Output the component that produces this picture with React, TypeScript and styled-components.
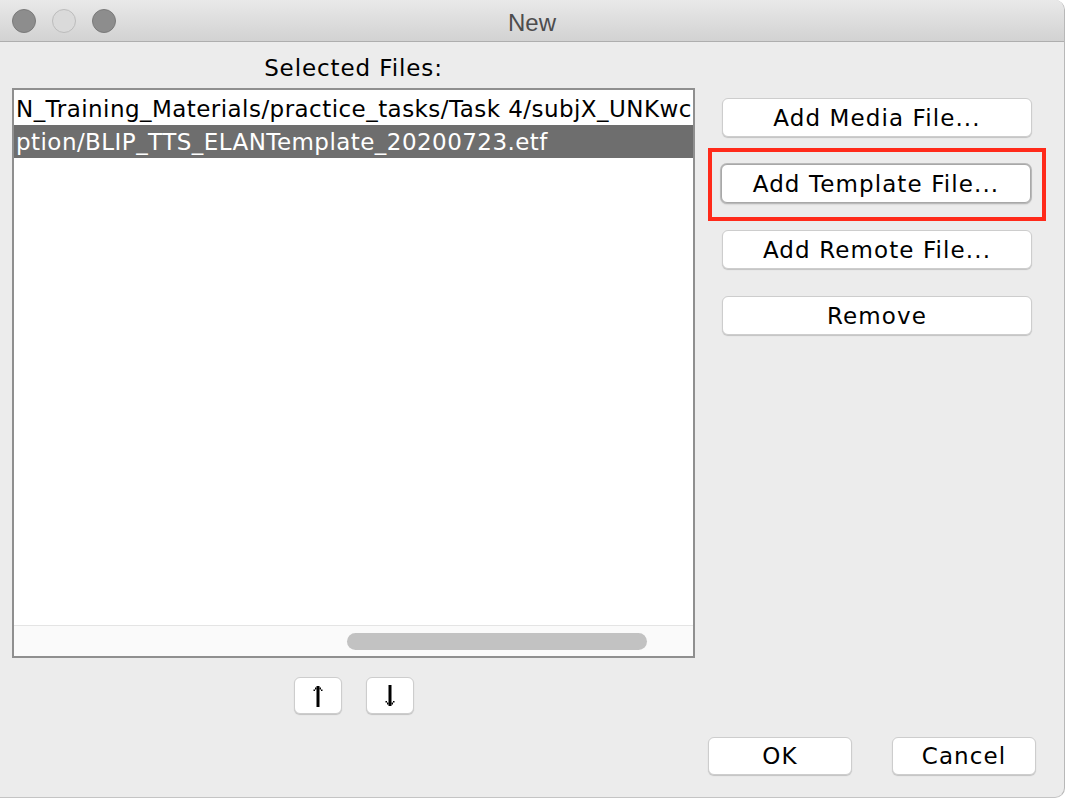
import React from "react";
import styled, { createGlobalStyle } from "styled-components";

const Global = createGlobalStyle`
  html, body { margin: 0; padding: 0; background: #ffffff; }
  body { font-family: "DejaVu Sans", "Liberation Sans", sans-serif; }
  * { box-sizing: border-box; }
`;

const Window = styled.div`
  width: 1065px;
  height: 798px;
  background: #ececec;
  border-right: 1px solid #b8b8b8;
  border-bottom: 1px solid #c4c4c4;
  border-radius: 0 10px 10px 0;
  overflow: hidden;
  display: flex;
  flex-direction: column;
`;

const TitleBar = styled.div`
  height: 42px;
  flex: none;
  display: flex;
  align-items: center;
  position: relative;
  background: linear-gradient(#e9e9e9, #d2d2d2);
  border-bottom: 1px solid #aeaeae;
  padding-left: 12px;
  gap: 16px;
`;

const Light = styled.span<{ $dim?: boolean }>`
  width: 24px;
  height: 24px;
  border-radius: 50%;
  background: ${(p) => (p.$dim ? "#dadada" : "#8d8d8d")};
  border: 1px solid ${(p) => (p.$dim ? "#bcbcbc" : "#7a7a7a")};
  margin-top: 1px;
`;

const Title = styled.div`
  position: absolute;
  left: 0;
  right: 0;
  top: 2px;
  height: 41px;
  display: flex;
  align-items: center;
  justify-content: center;
  font-family: "Liberation Sans", Arial, sans-serif;
  font-size: 24px;
  color: #4d4d4d;
  pointer-events: none;
`;

const Body = styled.div`
  flex: 1;
  display: flex;
  flex-direction: column;
  padding: 0 28px 0 12px;
`;

const Main = styled.div`
  display: flex;
`;

const LeftColumn = styled.div`
  width: 683px;
  display: flex;
  flex-direction: column;
  align-items: center;
`;

const Label = styled.div`
  height: 46px;
  display: flex;
  align-items: center;
  font-size: 23px;
  letter-spacing: 0.9px;
  color: #000;
  padding-top: 6px;
`;

const ListBox = styled.div`
  width: 683px;
  height: 570px;
  border: 2px solid #8f8f8f;
  background: #ffffff;
  display: flex;
  flex-direction: column;
`;

const Rows = styled.div`
  flex: 1;
  overflow: hidden;
  padding-top: 2px;
`;

const Row = styled.div<{ $selected?: boolean }>`
  height: 33px;
  line-height: 35px;
  padding-left: 2px;
  font-size: 23px;
  letter-spacing: 0.45px;
  white-space: nowrap;
  overflow: hidden;
  color: ${(p) => (p.$selected ? "#ffffff" : "#000000")};
  background: ${(p) => (p.$selected ? "#6e6e6e" : "transparent")};
`;

const HScroll = styled.div`
  height: 31px;
  flex: none;
  background: #fafafa;
  border-top: 1px solid #e4e4e4;
  display: flex;
  align-items: center;
  padding-left: 333px;
`;

const Thumb = styled.div`
  width: 300px;
  height: 17px;
  border-radius: 9px;
  background: #c2c2c2;
`;

const ArrowRow = styled.div`
  margin-top: 19px;
  display: flex;
  gap: 24px;
`;

const Button = styled.button<{ $w?: number; $h?: number; $focus?: boolean }>`
  width: ${(p) => p.$w ?? 310}px;
  height: ${(p) => p.$h ?? 39}px;
  background: #ffffff;
  border: 1px solid ${(p) => (p.$focus ? "#a8a8a8" : "#cdcdcd")};
  border-radius: 6px;
  box-shadow: ${(p) =>
    p.$focus
      ? "0 0 0 1px #b9b9b9, 0 1px 2px rgba(0,0,0,0.25)"
      : "0 1px 1px rgba(0,0,0,0.18)"};
  font-family: "DejaVu Sans", sans-serif;
  font-size: 23px;
  letter-spacing: 1.1px;
  color: #000;
  padding: 0;
  display: flex;
  align-items: center;
  justify-content: center;
  flex: none;
`;

const RightColumn = styled.div`
  margin-left: 27px;
  padding-top: 56px;
  display: flex;
  flex-direction: column;
  gap: 27px;
`;

const Highlight = styled.div`
  border: 4px solid #ff2a1a;
  margin: -16px -14px -18px -14px;
  padding: 12px 10px 14px 9px;
`;

const Footer = styled.div`
  margin-top: 23px;
  display: flex;
  justify-content: flex-end;
  gap: 40px;
`;

const ArrowIcon = ({ down }: { down?: boolean }) => (
  <svg width="14" height="24" viewBox="0 0 14 24" style={{ transform: down ? "rotate(180deg)" : undefined }}>
    <rect x="5.5" y="2" width="3" height="21" fill="#000" />
    <rect x="4" y="3.5" width="1.5" height="2" fill="#000" />
    <rect x="8.5" y="3.5" width="1.5" height="2" fill="#000" />
    <rect x="2.5" y="5.5" width="1.5" height="1.5" fill="#000" />
    <rect x="10" y="5.5" width="1.5" height="1.5" fill="#000" />
  </svg>
);

export default function App() {
  return (
    <>
      <Global />
      <Window>
        <TitleBar>
          <Light />
          <Light $dim />
          <Light />
          <Title>New</Title>
        </TitleBar>
        <Body>
          <Main>
            <LeftColumn>
              <Label>Selected Files:</Label>
              <ListBox>
                <Rows>
                  <Row>N_Training_Materials/practice_tasks/Task 4/subjX_UNKwc</Row>
                  <Row $selected>ption/BLIP_TTS_ELANTemplate_20200723.etf</Row>
                </Rows>
                <HScroll>
                  <Thumb />
                </HScroll>
              </ListBox>
              <ArrowRow>
                <Button $w={48} $h={37}>
                  <ArrowIcon />
                </Button>
                <Button $w={48} $h={37}>
                  <ArrowIcon down />
                </Button>
              </ArrowRow>
            </LeftColumn>
            <RightColumn>
              <Button>Add Media File...</Button>
              <Highlight>
                <Button $focus>Add Template File...</Button>
              </Highlight>
              <Button>Add Remote File...</Button>
              <Button>Remove</Button>
            </RightColumn>
          </Main>
          <Footer>
            <Button $w={144} $h={38}>OK</Button>
            <Button $w={144} $h={38}>Cancel</Button>
          </Footer>
        </Body>
      </Window>
    </>
  );
}
